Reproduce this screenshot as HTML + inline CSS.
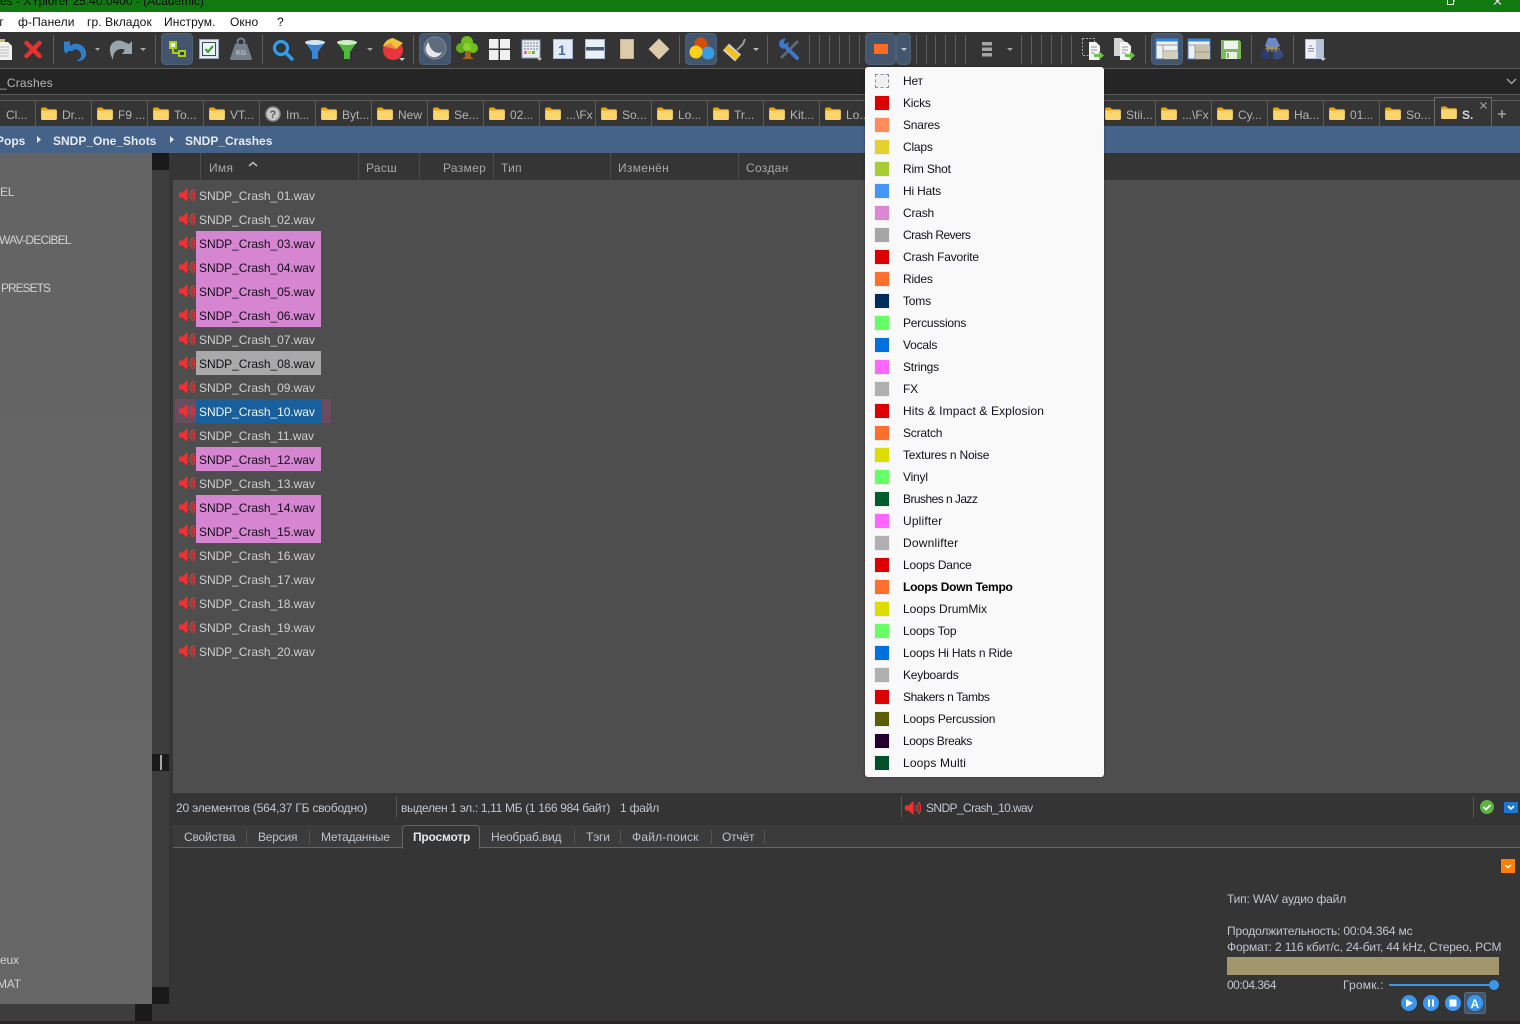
<!DOCTYPE html>
<html><head><meta charset="utf-8"><title>XYplorer</title>
<style>
html,body{margin:0;padding:0;background:#353535}
#p{position:relative;width:1520px;height:1024px;overflow:hidden;background:#353535;font:12px/16px "Liberation Sans","Noto Sans CJK SC",sans-serif;letter-spacing:-.2px;color:#c4c4c4}
#p div,#p span.t{position:absolute}
.t{white-space:nowrap;height:16px}
.b{background:#000}
.m{color:#111;letter-spacing:.1px}
.h{color:#a8a8a8;letter-spacing:.3px}
.r{color:#cfcfcf;left:199px;letter-spacing:-.05px}
.k{color:#101018;left:199px;letter-spacing:-.05px}
.s{left:875px;width:14px;height:14px;outline:1px solid #efefef}
.l{left:903px;color:#10101a}
.tb{color:#b4b4b4;top:107px;letter-spacing:0}
.st{color:#c0c8d0;top:800px}
.pt{color:#bcc4cc;top:829px}
.pv{color:#c0c8d0;left:1227px;letter-spacing:-.16px}
.cs{width:1px;height:29px;top:35px;background:#5c5c5c}
.ts{width:1px;height:26px;top:100px;background:#5a5a5a}
.hs{width:1px;height:27px;top:153px;background:#4d4d4d}
.bc{color:#e6ebf2;font-weight:bold;top:133px;letter-spacing:0}
.ps{width:1px;height:14px;top:830px;background:#555}
</style></head><body><div id="p">
<svg width="0" height="0" style="position:absolute"><defs>
<symbol id="spk" viewBox="0 0 16 16"><path d="M0 5.500h3.500L8.500 1v14L3.500 10.500H0z" fill="#f23030"/><path d="M10 5.500q1.500 2.500 0 5M11.800 3.500q2.800 4.500 0 9M13.800 1.800q3.500 6.200 0 12.400" fill="none" stroke="#f23030" stroke-width="1.300"/></symbol>
<symbol id="fld" viewBox="0 0 17 14"><path d="M0 2q0-1.500 1.500-1.500h4L7.500 2.500H0z" fill="#eda30f"/><path d="M0 3h15.500q1.500 0 1.500 1.500v8q0 1.500-1.500 1.500h-14Q0 14 0 12.500z" fill="#fbd56f"/><path d="M.5 2.500h16v1.500H.5z" fill="#f4b92c"/></symbol>
</defs></svg>

<!-- title -->
<div style="left:0;top:0;width:1520px;height:12px;background:#107a10;overflow:hidden"><span class="t" style="left:0;top:-7px;color:#0a0a0a;letter-spacing:0">es - XYplorer 25.40.0400 - (Academic)</span></div>
<svg style="position:absolute;left:0;top:0" width="1520" height="12"><path d="M1447.500 -2v6.500h6v-6.500M1453.500 1h1.500" fill="none" stroke="#fff"/><path d="M1494 -2l7 6.500M1501 -2l-7 6.500" stroke="#fff" fill="none"/></svg>

<!-- menu -->
<div style="left:0;top:12px;width:1520px;height:20px;background:#fff"></div>
<span class="t m" style="left:-2px;top:14px">т</span><span class="t m" style="left:18px;top:14px">ф-Панели</span><span class="t m" style="left:87px;top:14px">гр. Вкладок</span><span class="t m" style="left:164px;top:14px">Инструм.</span><span class="t m" style="left:230px;top:14px">Окно</span><span class="t m" style="left:277px;top:14px">?</span>

<!-- toolbar -->
<div style="left:0;top:32px;width:1520px;height:36px;background:#343434"></div>
<div style="left:0;top:68px;width:1520px;height:1px;background:#5c5c5c"></div>
<div class="cs" style="left:53px"></div><div class="cs" style="left:155px"></div><div class="cs" style="left:262px"></div><div class="cs" style="left:413px"></div><div class="cs" style="left:679px"></div><div class="cs" style="left:767px"></div><div class="cs" style="left:809px"></div><div class="cs" style="left:819px"></div><div class="cs" style="left:829px"></div><div class="cs" style="left:839px"></div><div class="cs" style="left:849px"></div><div class="cs" style="left:859px"></div><div class="cs" style="left:916px"></div><div class="cs" style="left:926px"></div><div class="cs" style="left:935px"></div><div class="cs" style="left:945px"></div><div class="cs" style="left:955px"></div><div class="cs" style="left:965px"></div><div class="cs" style="left:1021px"></div><div class="cs" style="left:1031px"></div><div class="cs" style="left:1041px"></div><div class="cs" style="left:1051px"></div><div class="cs" style="left:1061px"></div><div class="cs" style="left:1071px"></div><div class="cs" style="left:1145px"></div><div class="cs" style="left:1251px"></div><div class="cs" style="left:1293px"></div>
<svg style="position:absolute;left:0;top:0" width="1520" height="70">
<!-- active boxes -->
<g fill="#43566e" stroke="#4f6175"><rect x="161.500" y="33.500" width="31" height="31" rx="4"/><rect x="419.500" y="33.500" width="31" height="31" rx="4"/><rect x="685.500" y="33.500" width="31" height="31" rx="4"/><rect x="865.500" y="33.500" width="30" height="31" rx="4"/><rect x="896.500" y="33.500" width="14" height="31" rx="4"/><rect x="1151.500" y="33.500" width="31" height="31" rx="4"/></g>
<!-- doc -->
<path d="M-2 42h10l4 4v14H-2z" fill="#f2f2f2"/><path d="M-2 47h11M-2 50h11M-2 53h11M-2 56h11" stroke="#bbb"/><path d="M0 39h5v3H0z" fill="#d9b36a"/>
<!-- X -->
<path d="M26.500 43l13 13M39.500 43l-13 13" stroke="#e2332f" stroke-width="4.500" stroke-linecap="round"/>
<!-- undo -->
<path d="M70 41l-6 1 1 12 4-3c5-3 11-2 12 3 1 4-2 6-5 7 6 1 11-3 10-9-1-7-10-11-16-6z" fill="#2f7fcb"/><path d="M64 41v10h10z" fill="#2f7fcb"/>
<path d="M95 48h5l-2.500 3zM140 48h6l-3 3z" fill="#a5a5a5"/>
<path d="M122 41c-7-2-13 3-12 10 .5 4 2 7 3 9 0-6 2-11 9-11 1 0 2 .5 3 1l-3 4h10V41l-3 3z" fill="#9aa4ad"/>
<!-- tree tool -->
<g fill="none" stroke="#a8cf1f" stroke-width="2"><rect x="170" y="42" width="6" height="6" fill="#eef"/><path d="M173 48v5h6"/><rect x="179" y="51" width="6" height="5" fill="#334"/></g>
<!-- check -->
<rect x="199.500" y="39.500" width="19" height="19" fill="#e2e9f3" stroke="#9aa9bd"/><rect x="202.500" y="42.500" width="13" height="13" fill="#f0f4f8" stroke="#3d4a58"/><path d="M205.500 49l2.500 3 5-6" stroke="#1fa51f" stroke-width="2" fill="none"/>
<!-- weight -->
<path d="M235 44h12l5 15q0 1-2 1h-18q-2 0-2-1z" fill="#75808b"/><circle cx="241" cy="42" r="3.500" fill="none" stroke="#75808b" stroke-width="2"/>
<text x="236" y="55" font-size="7" font-family="Liberation Sans" font-weight="bold" fill="#b6bec6">KG</text>
<!-- search -->
<circle cx="281" cy="48" r="6.500" fill="none" stroke="#2d9df0" stroke-width="3.200"/><path d="M286 53l6 6" stroke="#2d9df0" stroke-width="3.500" stroke-linecap="round"/>
<!-- filters -->
<path d="M305 42h20l-7 10v7h-6v-7z" fill="#3a85d5"/><ellipse cx="315" cy="42.500" rx="10" ry="2.500" fill="#d4e6f6"/>
<path d="M337 42h20l-7 10v7h-6v-7z" fill="#4fbb3a"/><ellipse cx="347" cy="42.500" rx="10" ry="2.500" fill="#d2f0c8"/>
<path d="M367 48h6l-3 3z" fill="#a5a5a5"/>
<!-- pie -->
<circle cx="393" cy="50" r="10" fill="#e9353c"/><path d="M393 38l10 5-7 6-13-3q3-7 10-8z" fill="#f3c239"/><path d="M383 46l13 3-5-6z" fill="#e9874c"/><path d="M399 58h6l-3 3z" fill="#ccc"/>
<!-- moon -->
<circle cx="435" cy="48" r="11" fill="#5d6b7a" stroke="#7f8a96"/><path d="M429 42a8.500 8.500 0 1 0 13 10c-5 3-13-2-13-10z" fill="#f5f5f5" opacity=".9"/>
<!-- tree -->
<path d="M465 50h5l1 7 3 2h-12l3-2z" fill="#a4651f"/><circle cx="467" cy="42" r="6" fill="#6fbe1f"/><circle cx="461" cy="48" r="5" fill="#5fae16"/><circle cx="473" cy="48" r="5" fill="#6fbe1f"/><circle cx="467" cy="47" r="4" fill="#8ad12b"/>
<!-- grid -->
<g fill="#f0f0f0"><rect x="489" y="39" width="9.500" height="9.500"/><rect x="500" y="39" width="10" height="9.500"/><rect x="489" y="50" width="9.500" height="10"/><rect x="500" y="50" width="10" height="10"/></g>
<!-- table -->
<rect x="522" y="40" width="18" height="18" fill="#e8ecf3" stroke="#8fa0b6"/><path d="M524 43h14M524 46h14M524 49h14" stroke="#778" stroke-dasharray="2 1"/><path d="M524 51h3v3h-3z" fill="#d66ac0"/><path d="M528 51h3v3h-3z" fill="#e9c83a"/><path d="M532 51h3v3h-3z" fill="#5cb848"/><path d="M537 58h5l-2.500 3z" fill="#ccc"/>
<!-- 1 -->
<rect x="553.500" y="39.500" width="19" height="19" fill="#e2ebfa" stroke="#a9bbd8"/><text x="558" y="55" font-size="14" font-weight="bold" font-family="Liberation Sans" fill="#4b6a92">1</text>
<!-- horiz -->
<rect x="585.500" y="39.500" width="19" height="19" fill="#eaf0fa" stroke="#a9bbd8"/><rect x="586" y="47" width="18" height="3.500" fill="#49586c"/>
<!-- vert -->
<rect x="620.500" y="39.500" width="13" height="19" fill="#dccbab" stroke="#c6b28d"/>
<!-- diamond -->
<path d="M659 38.500l10.500 10.500-10.500 10.500-10.500-10.500z" fill="#dccbab"/>
<!-- circles -->
<circle cx="701" cy="44" r="6.500" fill="#d14f0c"/><circle cx="708" cy="53" r="6.500" fill="#3c9ae0"/><circle cx="696" cy="52" r="6.500" fill="#ffd21a"/>
<!-- roller -->
<path d="M737 50l6-6 2-5" fill="none" stroke="#999" stroke-width="2"/><path d="M726 47l12 11" stroke="#d8d8d8" stroke-width="9"/><path d="M726 47l12 11" stroke="#f1c21f" stroke-width="6"/>
<path d="M753 48h6l-3 3z" fill="#bbb"/>
<!-- wrench -->
<path d="M798 41l-17 17" stroke="#5d6670" stroke-width="3"/><path d="M785 46l12 12" stroke="#3a78d4" stroke-width="4" stroke-linecap="round"/><path d="M780 46q-2-6 5-7l-2 3 2 3 3-2q0 6-6 5z" fill="#3a78d4" stroke="#3a78d4"/>
<!-- swatch -->
<rect x="874" y="44" width="14" height="10" fill="#fc6a26"/><path d="M901 48h6l-3 3z" fill="#b9c4d0"/>
<!-- stack -->
<path d="M982 42h10v3.500h-10zM982 47.500h10v3.500h-10zM982 53h10v3.500h-10z" fill="#a5a5a5"/><path d="M1007 48h6l-3 3z" fill="#a5a5a5"/>
<!-- copy docs -->
<rect x="1082.500" y="38.500" width="12" height="17" fill="none" stroke="#aaa" stroke-dasharray="2 1.500"/><path d="M1089 42h7l4 4v14h-11z" fill="#f4f4f4"/><path d="M1091 47h6M1091 50h6M1091 53h4" stroke="#999"/><path d="M1094 54h5v-3l5 4.500-5 4.500v-3h-5z" fill="#6fc04a"/>
<path d="M1114 38h7l4 4v14h-11z" fill="#d4d4d4"/><path d="M1120 42h7l4 4v14h-11z" fill="#f4f4f4"/><path d="M1122 47h6M1122 50h6M1122 53h4" stroke="#999"/><path d="M1125 54h5v-3l5 4.500-5 4.500v-3h-5z" fill="#6fc04a"/>
<!-- layouts -->
<rect x="1156" y="39" width="22" height="20" fill="#eef2f7" stroke="#3f7fd0"/><rect x="1156" y="39" width="22" height="2.500" fill="#2d86e2"/><path d="M1156 45h22M1163 45v14M1163 51h15" stroke="#a39a80"/><rect x="1164" y="52" width="14" height="7" fill="#d2cdbd"/>
<rect x="1188" y="39" width="22" height="20" fill="#eef2f7" stroke="#3f7fd0"/><rect x="1188" y="39" width="22" height="2.500" fill="#2d86e2"/><rect x="1195" y="46" width="15" height="13" fill="#c8c2ac"/><path d="M1188 45h22M1195 45v14M1195 52h15" stroke="#a39a80"/>
<!-- floppy -->
<path d="M1221 40h18l2 2v17h-20z" fill="#7db85c"/><rect x="1224" y="41" width="14" height="8" fill="#f1f1f1"/><rect x="1226" y="52" width="11" height="7" fill="#e8f0e2"/><rect x="1227" y="53" width="2" height="5" fill="#7db85c"/>
<!-- recycle -->
<path d="M1268 38h8l4 8-4 3h-8l-3-3z" fill="#6d88c8"/><path d="M1263 50h9l-2 9h-6l-4-4z" fill="#2c3c6a"/><path d="M1273 50h8l3 5-4 4h-7z" fill="#384b80"/><path d="M1265 49h15M1268 46v6M1272 46v6M1276 46v6" stroke="#c79a28"/>
<!-- page -->
<rect x="1305.500" y="39.500" width="18" height="19" fill="#eef2f8" stroke="#a9bbd8"/><rect x="1316" y="40" width="7" height="18" fill="#b5c4d8"/><path d="M1309 46h3M1308 48.500h6M1308 51h6" stroke="#889"/><path d="M1320 58h6l-3 3z" fill="#ccc"/>
</svg>

<!-- address -->
<div style="left:0;top:69px;width:1520px;height:25px;background:#252525"></div>
<div style="left:0;top:94px;width:1520px;height:1px;background:#5c5c5c"></div>
<span class="t" style="left:0;top:75px;color:#b6b6b6;letter-spacing:.2px">_Crashes</span>
<svg style="position:absolute;left:1506px;top:78px" width="11" height="8"><path d="M1 1l4.500 4.500L10 1" fill="none" stroke="#aaa" stroke-width="1.300"/></svg>

<!-- tabs -->
<div style="left:0;top:100px;width:1520px;height:1px;background:#5c5c5c"></div>
<div class="ts" style="left:35px"></div><div class="ts" style="left:91px"></div><div class="ts" style="left:147px"></div><div class="ts" style="left:203px"></div><div class="ts" style="left:259px"></div><div class="ts" style="left:315px"></div><div class="ts" style="left:371px"></div><div class="ts" style="left:427px"></div><div class="ts" style="left:483px"></div><div class="ts" style="left:539px"></div><div class="ts" style="left:595px"></div><div class="ts" style="left:651px"></div><div class="ts" style="left:707px"></div><div class="ts" style="left:763px"></div><div class="ts" style="left:819px"></div><div class="ts" style="left:1155px"></div><div class="ts" style="left:1211px"></div><div class="ts" style="left:1267px"></div><div class="ts" style="left:1323px"></div><div class="ts" style="left:1379px"></div>
<div style="left:1434px;top:97px;width:56px;height:29px;border:1px solid #6a6a6a;border-bottom:0;box-sizing:content-box;background:#353535"></div>
<svg style="position:absolute;left:0;top:100px" width="1520" height="26">
<use href="#fld" x="41" y="7" width="16" height="13"/><use href="#fld" x="97" y="7" width="16" height="13"/><use href="#fld" x="153" y="7" width="16" height="13"/><use href="#fld" x="209" y="7" width="16" height="13"/>
<circle cx="273" cy="14" r="7" fill="#c9c9c9" stroke="#8a8a8a" stroke-width="1.500"/>
<text x="269.500" y="18" font-size="11" font-weight="bold" font-family="Liberation Sans" fill="#555">?</text>
<use href="#fld" x="321" y="7" width="16" height="13"/><use href="#fld" x="377" y="7" width="16" height="13"/><use href="#fld" x="433" y="7" width="16" height="13"/><use href="#fld" x="489" y="7" width="16" height="13"/><use href="#fld" x="545" y="7" width="16" height="13"/><use href="#fld" x="601" y="7" width="16" height="13"/><use href="#fld" x="657" y="7" width="16" height="13"/><use href="#fld" x="713" y="7" width="16" height="13"/><use href="#fld" x="769" y="7" width="16" height="13"/><use href="#fld" x="825" y="7" width="16" height="13"/>
<use href="#fld" x="1105" y="7" width="16" height="13"/><use href="#fld" x="1161" y="7" width="16" height="13"/><use href="#fld" x="1217" y="7" width="16" height="13"/><use href="#fld" x="1273" y="7" width="16" height="13"/><use href="#fld" x="1329" y="7" width="16" height="13"/><use href="#fld" x="1385" y="7" width="16" height="13"/><use href="#fld" x="1441" y="6" width="16" height="13"/>
<path d="M1480.500 2.500l6 6M1486.500 2.500l-6 6" stroke="#aaa"/>
<path d="M1498 14h8M1502 10v8" stroke="#a0a0a0" stroke-width="1.600"/>
</svg>
<span class="t tb" style="left:6px">Cl...</span><span class="t tb" style="left:62px">Dr...</span><span class="t tb" style="left:118px">F9 ...</span><span class="t tb" style="left:174px">To...</span><span class="t tb" style="left:230px">VT...</span><span class="t tb" style="left:286px">Im...</span><span class="t tb" style="left:342px">Byt...</span><span class="t tb" style="left:398px">New</span><span class="t tb" style="left:454px">Se...</span><span class="t tb" style="left:510px">02...</span><span class="t tb" style="left:566px">...\Fx</span><span class="t tb" style="left:622px">So...</span><span class="t tb" style="left:678px">Lo...</span><span class="t tb" style="left:734px">Tr...</span><span class="t tb" style="left:790px">Kit...</span><span class="t tb" style="left:846px">Lo...</span><span class="t tb" style="left:1126px">Stii...</span><span class="t tb" style="left:1182px">...\Fx</span><span class="t tb" style="left:1238px">Cy...</span><span class="t tb" style="left:1294px">Ha...</span><span class="t tb" style="left:1350px">01...</span><span class="t tb" style="left:1406px">So...</span><span class="t tb" style="left:1462px;font-weight:bold;color:#d8d8d8">S.</span>

<!-- breadcrumb -->
<div style="left:0;top:126px;width:1520px;height:27px;background:#456288"></div>
<span class="t bc" style="left:-4px">Pops</span><span class="t bc" style="left:53px">SNDP_One_Shots</span><span class="t bc" style="left:185px">SNDP_Crashes</span>
<svg style="position:absolute;left:0;top:126px" width="200" height="27"><path d="M37 10l4 3.500-4 3.500zM170 10l4 3.500-4 3.500z" fill="#e6ebf2"/></svg>

<!-- header -->
<div class="hs" style="left:200px"></div><div class="hs" style="left:358px"></div><div class="hs" style="left:419px"></div><div class="hs" style="left:493px"></div><div class="hs" style="left:610px"></div><div class="hs" style="left:738px"></div>
<span class="t h" style="left:209px;top:160px">Имя</span><span class="t h" style="left:366px;top:160px">Расш</span><span class="t h" style="left:443px;top:160px">Размер</span><span class="t h" style="left:501px;top:160px">Тип</span><span class="t h" style="left:618px;top:160px">Изменён</span><span class="t h" style="left:746px;top:160px">Создан</span>
<svg style="position:absolute;left:248px;top:161px" width="10" height="7"><path d="M1 5l4-3.500L9 5" fill="none" stroke="#bbb" stroke-width="1.500"/></svg>

<!-- tree -->
<div style="left:0;top:153px;width:152px;height:851px;background:linear-gradient(#646464,#666)"></div>
<span class="t" style="left:0;top:184px;color:#d2d2d2">EL</span><span class="t" style="left:-1px;top:232px;color:#d2d2d2;letter-spacing:-.75px">WAV-DECiBEL</span><span class="t" style="left:1px;top:280px;color:#d2d2d2;letter-spacing:-1px">PRESETS</span><span class="t" style="left:0;top:952px;color:#d2d2d2">eux</span><span class="t" style="left:-3px;top:976px;color:#d2d2d2">MAT</span>
<div style="left:152px;top:153px;width:17px;height:851px;background:#3d3d3d"></div>
<div style="left:152px;top:153px;width:17px;height:17px;background:#1a1a1a"></div>
<div style="left:152px;top:754px;width:17px;height:17px;background:#1a1a1a"></div>
<div style="left:160px;top:755px;width:2px;height:15px;background:#a8a8a8"></div>
<div style="left:152px;top:987px;width:17px;height:17px;background:#1a1a1a"></div>
<div style="left:0;top:1004px;width:152px;height:17px;background:#3d3d3d"></div>
<div style="left:135px;top:1004px;width:17px;height:17px;background:#1a1a1a"></div>
<div style="left:0;top:1021px;width:1520px;height:3px;background:#2a2522"></div>

<!-- list -->
<div style="left:173px;top:180px;width:1347px;height:613px;background:#4e4e4e"></div>
<div style="left:175px;top:399px;width:156px;height:24px;background:#6b4b5e"></div>
<div style="left:196px;top:231px;width:125px;height:96px;background:#d685d0"></div>
<div style="left:196px;top:351px;width:125px;height:24px;background:#a9a9a9"></div>
<div style="left:196px;top:399px;width:125px;height:24px;background:#17609d"></div>
<div style="left:196px;top:447px;width:125px;height:24px;background:#d685d0"></div>
<div style="left:196px;top:495px;width:125px;height:48px;background:#d685d0"></div>
<svg style="position:absolute;left:179px;top:180px" width="17" height="490">
<use href="#spk" y="7" width="16" height="16"/><use href="#spk" y="31" width="16" height="16"/><use href="#spk" y="55" width="16" height="16"/><use href="#spk" y="79" width="16" height="16"/><use href="#spk" y="103" width="16" height="16"/><use href="#spk" y="127" width="16" height="16"/><use href="#spk" y="151" width="16" height="16"/><use href="#spk" y="175" width="16" height="16"/><use href="#spk" y="199" width="16" height="16"/><use href="#spk" y="223" width="16" height="16"/><use href="#spk" y="247" width="16" height="16"/><use href="#spk" y="271" width="16" height="16"/><use href="#spk" y="295" width="16" height="16"/><use href="#spk" y="319" width="16" height="16"/><use href="#spk" y="343" width="16" height="16"/><use href="#spk" y="367" width="16" height="16"/><use href="#spk" y="391" width="16" height="16"/><use href="#spk" y="415" width="16" height="16"/><use href="#spk" y="439" width="16" height="16"/><use href="#spk" y="463" width="16" height="16"/>
</svg>
<span class="t r" style="top:188px">SNDP_Crash_01.wav</span>
<span class="t r" style="top:212px">SNDP_Crash_02.wav</span>
<span class="t k" style="top:236px">SNDP_Crash_03.wav</span>
<span class="t k" style="top:260px">SNDP_Crash_04.wav</span>
<span class="t k" style="top:284px">SNDP_Crash_05.wav</span>
<span class="t k" style="top:308px">SNDP_Crash_06.wav</span>
<span class="t r" style="top:332px">SNDP_Crash_07.wav</span>
<span class="t k" style="top:356px">SNDP_Crash_08.wav</span>
<span class="t r" style="top:380px">SNDP_Crash_09.wav</span>
<span class="t" style="left:199px;top:404px;color:#f0f4f8;letter-spacing:-.05px">SNDP_Crash_10.wav</span>
<span class="t r" style="top:428px">SNDP_Crash_11.wav</span>
<span class="t k" style="top:452px">SNDP_Crash_12.wav</span>
<span class="t r" style="top:476px">SNDP_Crash_13.wav</span>
<span class="t k" style="top:500px">SNDP_Crash_14.wav</span>
<span class="t k" style="top:524px">SNDP_Crash_15.wav</span>
<span class="t r" style="top:548px">SNDP_Crash_16.wav</span>
<span class="t r" style="top:572px">SNDP_Crash_17.wav</span>
<span class="t r" style="top:596px">SNDP_Crash_18.wav</span>
<span class="t r" style="top:620px">SNDP_Crash_19.wav</span>
<span class="t r" style="top:644px">SNDP_Crash_20.wav</span>

<!-- status -->
<div style="left:173px;top:793px;width:1347px;height:32px;background:#343434"></div>
<div style="left:396px;top:796px;width:1px;height:22px;background:#555"></div>
<div style="left:901px;top:796px;width:1px;height:22px;background:#555"></div>
<div style="left:1473px;top:797px;width:1px;height:21px;background:#555"></div>
<span class="t st" style="left:176px">20 элементов (564,37 ГБ свободно)</span>
<span class="t st" style="left:401px;letter-spacing:-.33px">выделен 1 эл.: 1,11 МБ (1 166 984 байт)</span>
<span class="t st" style="left:620px">1 файл</span>
<svg style="position:absolute;left:905px;top:800px" width="17" height="16"><use href="#spk" width="16" height="16"/></svg>
<span class="t st" style="left:926px;letter-spacing:-.6px">SNDP_Crash_10.wav</span>
<svg style="position:absolute;left:1478px;top:798px" width="42" height="18"><circle cx="9" cy="9" r="7" fill="#5cb342"/><path d="M5.500 9l2.500 2.500 4.500-4.500" fill="none" stroke="#fff" stroke-width="1.800"/><rect x="26" y="4" width="14" height="11" fill="#1e78d2"/><path d="M30 8l3 3 3-3" fill="none" stroke="#fff" stroke-width="1.600"/></svg>

<!-- prop tabs -->
<div style="left:173px;top:825px;width:1347px;height:22px;background:#3b3b3b"></div>
<div style="left:173px;top:847px;width:229px;height:1px;background:#666"></div>
<div style="left:480px;top:847px;width:1040px;height:1px;background:#666"></div>
<div style="left:402px;top:825px;width:76px;height:23px;background:#353535;border:1px solid #666;border-bottom:0;border-radius:4px 4px 0 0"></div>
<div class="ps" style="left:246px"></div><div class="ps" style="left:309px"></div><div class="ps" style="left:574px"></div><div class="ps" style="left:620px"></div><div class="ps" style="left:711px"></div><div class="ps" style="left:764px"></div>
<span class="t pt" style="left:184px">Свойства</span><span class="t pt" style="left:258px">Версия</span><span class="t pt" style="left:321px">Метаданные</span><span class="t pt" style="left:413px;font-weight:bold;color:#e4e8ec">Просмотр</span><span class="t pt" style="left:491px">Необраб.вид</span><span class="t pt" style="left:586px">Тэги</span><span class="t pt" style="left:632px;letter-spacing:.2px">Файл-поиск</span><span class="t pt" style="left:722px">Отчёт</span>

<!-- preview -->
<svg style="position:absolute;left:1501px;top:859px" width="14" height="14"><rect width="14" height="14" fill="#ff8000"/><path d="M4 6l3 2.500L10 6" fill="none" stroke="#fff" stroke-width="1.500"/></svg>
<span class="t pv" style="top:891px">Тип: WAV аудио файл</span>
<span class="t pv" style="top:923px">Продолжительность: 00:04.364 мс</span>
<span class="t pv" style="top:939px">Формат: 2 116 кбит/с, 24-бит, 44 kHz, Стерео, PCM</span>
<div style="left:1227px;top:957px;width:272px;height:18px;background:#a2966d"></div>
<span class="t pv" style="top:977px;letter-spacing:-.5px">00:04.364</span>
<span class="t pv" style="left:1343px;top:977px;letter-spacing:.2px">Громк.:</span>
<svg style="position:absolute;left:1385px;top:978px" width="125" height="40">
<path d="M4 7h105" stroke="#3a97ee" stroke-width="2"/><circle cx="109" cy="7" r="5" fill="#3a97ee"/>
<rect x="79.500" y="14.500" width="21" height="21" rx="2" fill="#43566e" stroke="#566a82"/>
<circle cx="24" cy="25" r="8" fill="#3a97ee"/><path d="M21 21l7 4-7 4z" fill="#fff"/>
<circle cx="46" cy="25" r="8" fill="#3a97ee"/><path d="M43 21.500h2v7h-2zM47 21.500h2v7h-2z" fill="#fff"/>
<circle cx="68" cy="25" r="8" fill="#3a97ee"/><rect x="64.500" y="21.500" width="7" height="7" fill="#fff"/>
<circle cx="90" cy="25" r="8" fill="#3a97ee"/><text x="85.500" y="30" font-size="12" font-weight="bold" font-family="Liberation Sans" fill="#fff">A</text>
</svg>

<!-- dropdown -->
<div style="left:865px;top:67px;width:239px;height:710px;background:#f9f9f9;border-radius:3px;box-shadow:0 0 2px rgba(0,0,0,.4)"></div>
<div class="s" style="top:74px;background:#f0f0f0;outline:none;border:1px dashed #8a8a9a;width:12px;height:12px;left:875px"></div><span class="t l" style="top:73px">Нет</span>
<div class="s" style="top:96px;background:#dd0000"></div><span class="t l" style="top:95px">Kicks</span>
<div class="s" style="top:118px;background:#ff8c5a"></div><span class="t l" style="top:117px">Snares</span>
<div class="s" style="top:140px;background:#e6d030"></div><span class="t l" style="top:139px">Claps</span>
<div class="s" style="top:162px;background:#a8cc33"></div><span class="t l" style="top:161px">Rim Shot</span>
<div class="s" style="top:184px;background:#4596fa"></div><span class="t l" style="top:183px">Hi Hats</span>
<div class="s" style="top:206px;background:#da88d2"></div><span class="t l" style="top:205px">Crash</span>
<div class="s" style="top:228px;background:#a6a6a6"></div><span class="t l" style="top:227px;letter-spacing:-.5px">Crash Revers</span>
<div class="s" style="top:250px;background:#dd0000"></div><span class="t l" style="top:249px">Crash Favorite</span>
<div class="s" style="top:272px;background:#ff6f2c"></div><span class="t l" style="top:271px">Rides</span>
<div class="s" style="top:294px;background:#002d5c"></div><span class="t l" style="top:293px">Toms</span>
<div class="s" style="top:316px;background:#66ff66"></div><span class="t l" style="top:315px">Percussions</span>
<div class="s" style="top:338px;background:#0070dd"></div><span class="t l" style="top:337px">Vocals</span>
<div class="s" style="top:360px;background:#ff66ff"></div><span class="t l" style="top:359px">Strings</span>
<div class="s" style="top:382px;background:#b0b0b0"></div><span class="t l" style="top:381px">FX</span>
<div class="s" style="top:404px;background:#dd0000"></div><span class="t l" style="top:403px;letter-spacing:.12px">Hits &amp; Impact &amp; Explosion</span>
<div class="s" style="top:426px;background:#ff6f2c"></div><span class="t l" style="top:425px">Scratch</span>
<div class="s" style="top:448px;background:#dddd00"></div><span class="t l" style="top:447px">Textures n Noise</span>
<div class="s" style="top:470px;background:#66ff66"></div><span class="t l" style="top:469px">Vinyl</span>
<div class="s" style="top:492px;background:#005c2d"></div><span class="t l" style="top:491px;letter-spacing:-.55px">Brushes n Jazz</span>
<div class="s" style="top:514px;background:#ff66ff"></div><span class="t l" style="top:513px;letter-spacing:.17px">Uplifter</span>
<div class="s" style="top:536px;background:#b0b0b0"></div><span class="t l" style="top:535px;letter-spacing:.2px">Downlifter</span>
<div class="s" style="top:558px;background:#dd0000"></div><span class="t l" style="top:557px">Loops Dance</span>
<div class="s" style="top:580px;background:#ff6f2c"></div><span class="t l" style="top:579px;font-weight:bold;color:#000;letter-spacing:-.26px">Loops Down Tempo</span>
<div class="s" style="top:602px;background:#dddd00"></div><span class="t l" style="top:601px;letter-spacing:0">Loops DrumMix</span>
<div class="s" style="top:624px;background:#66ff66"></div><span class="t l" style="top:623px">Loops Top</span>
<div class="s" style="top:646px;background:#0070dd"></div><span class="t l" style="top:645px">Loops Hi Hats n Ride</span>
<div class="s" style="top:668px;background:#b0b0b0"></div><span class="t l" style="top:667px">Keyboards</span>
<div class="s" style="top:690px;background:#dd0000"></div><span class="t l" style="top:689px;letter-spacing:-.4px">Shakers n Tambs</span>
<div class="s" style="top:712px;background:#5c5c00"></div><span class="t l" style="top:711px">Loops Percussion</span>
<div class="s" style="top:734px;background:#22002b"></div><span class="t l" style="top:733px;letter-spacing:-.37px">Loops Breaks</span>
<div class="s" style="top:756px;background:#00502b"></div><span class="t l" style="top:755px;letter-spacing:.16px">Loops Multi</span>
</div></body></html>
